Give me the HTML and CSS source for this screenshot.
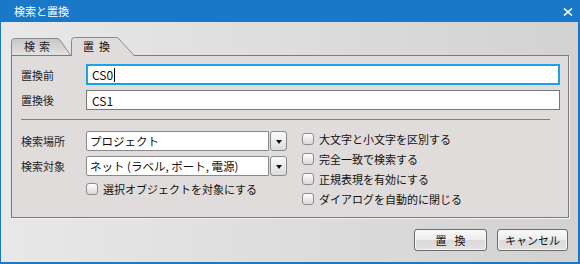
FILE: index.html
```html
<!DOCTYPE html>
<html lang="ja">
<head>
<meta charset="utf-8">
<title>検索と置換</title>
<link rel="stylesheet" href="styles.css">
</head>
<body>
<div class="window">
  <div class="titlebar">
    <span class="title">検索と置換</span>
    <svg class="close" width="10" height="8" viewBox="0 0 10 8"><path d="M1 0.5 L9 7.5 M9 0.5 L1 7.5" stroke="#fff" stroke-width="1.6" fill="none"/></svg>
  </div>
  <div class="client">
    <div class="tabs">
      <div class="tab tab-inactive">
        <svg class="tab-shape" width="60" height="17" viewBox="0 0 60 17">
          <defs><linearGradient id="g1" x1="0" y1="0" x2="0" y2="1"><stop offset="0" stop-color="#c6c6c6"/><stop offset="1" stop-color="#e2e2e2"/></linearGradient></defs>
          <path d="M0.5 17 V3.5 Q0.5 0.5 3.5 0.5 H46 Q48 0.5 49 2 L59.5 17" fill="url(#g1)" stroke="#8a8a8a"/>
        </svg>
        <span class="tab-label">検索</span>
      </div>
      <div class="tab tab-active">
        <svg class="tab-shape" width="64" height="19" viewBox="0 0 64 19">
          <path d="M0.5 19 V3.5 Q0.5 0.5 3.5 0.5 H45 Q47 0.5 48 2 L63.5 19" fill="#e0dcdb" stroke="#8a8a8a"/>
        </svg>
        <span class="tab-label">置換</span>
      </div>
    </div>
    <div class="panel">
      <div class="row">
        <span class="label">置換前</span>
        <div class="textbox focused"><span>CS0</span><span class="caret"></span></div>
      </div>
      <div class="row row2">
        <span class="label">置換後</span>
        <div class="textbox"><span>CS1</span></div>
      </div>
      <div class="separator"></div>
      <div class="lower">
        <div class="left-col">
          <div class="row sel-row">
            <span class="label">検索場所</span>
            <div class="combo"><div class="combo-field">プロジェクト</div><div class="combo-btn"><span class="arrow"></span></div></div>
          </div>
          <div class="row sel-row sel-row2">
            <span class="label">検索対象</span>
            <div class="combo"><div class="combo-field">ネット (ラベル, ポート, 電源)</div><div class="combo-btn"><span class="arrow"></span></div></div>
          </div>
          <div class="check left-check"><span class="box"></span>選択オブジェクトを対象にする</div>
        </div>
        <div class="right-col">
          <div class="check"><span class="box"></span>大文字と小文字を区別する</div>
          <div class="check"><span class="box"></span>完全一致で検索する</div>
          <div class="check"><span class="box"></span>正規表現を有効にする</div>
          <div class="check"><span class="box"></span>ダイアログを自動的に閉じる</div>
        </div>
      </div>
    </div>
    <div class="buttons">
      <button class="btn btn-replace">置換</button>
      <button class="btn btn-cancel">キャンセル</button>
    </div>
  </div>
</div>
</body>
</html>
```

FILE: styles.css
```css
html, body {
  margin: 0;
  padding: 0;
}
body {
  width: 580px;
  height: 264px;
  overflow: hidden;
  font-family: "Noto Sans CJK JP", "Noto Sans", sans-serif;
  font-size: 11px;
  color: #1a1a1a;
}
.window {
  width: 580px;
  height: 264px;
  background: #1a78c8;
  display: flex;
  flex-direction: column;
}
.titlebar {
  height: 22px;
  flex: none;
  display: flex;
  align-items: center;
  justify-content: space-between;
  padding: 0 7px 0 14px;
  color: #fff;
  font-size: 11px;
}
.title {
  line-height: 22px;
}
.close {
  display: block;
  margin-top: 1px;
}
.client {
  flex: 1;
  margin: 0 2px 2px 1px;
  background: linear-gradient(to right, #e8e8e8, #d2d2d2);
  padding: 15px 9px 0 10px;
  display: flex;
  flex-direction: column;
}
.tabs {
  height: 18px;
  display: flex;
  align-items: flex-start;
  position: relative;
  z-index: 1;
}
.tab {
  position: relative;
  display: flex;
  align-items: center;
}
.tab-shape {
  position: absolute;
  left: 0;
  top: 0;
}
.tab-label {
  position: relative;
  line-height: 1;
}
.tab-inactive {
  width: 60px;
  height: 17px;
  margin-top: 1px;
  padding-left: 13px;
  box-sizing: border-box;
  color: #222;
}
.tab-inactive .tab-label {
  letter-spacing: 4px;
}
.tab-active {
  width: 64px;
  height: 19px;
  padding-left: 12px;
  box-sizing: border-box;
  color: #111;
}
.tab-active .tab-label {
  letter-spacing: 5px;
}
.panel {
  height: 163px;
  box-sizing: border-box;
  border: 1px solid #7b7b7b;
  background: #e0dcdb;
  box-shadow: 1px 1px 0 #f2f2f2;
  padding: 8px 8px 0 9px;
}
.row {
  display: flex;
  align-items: center;
}
.row2 {
  margin-top: 5px;
}
.label {
  width: 65px;
  flex: none;
  color: #222;
}
.textbox {
  flex: 1;
  height: 21px;
  box-sizing: border-box;
  background: #fff;
  border: 1px solid #777;
  padding-left: 5px;
  display: flex;
  align-items: center;
  font-size: 12px;
  color: #111;
}
.textbox.focused {
  border: 2px solid #1ba1e6;
  padding-left: 4px;
}
.row2 .textbox {
  height: 20px;
}
.caret {
  display: inline-block;
  width: 1px;
  height: 14px;
  background: #000;
  margin-left: 1px;
}
.separator {
  margin-top: 9px;
  margin-right: 10px;
  height: 1px;
  background: #7e7e7e;
}
.lower {
  display: flex;
  margin-top: 9px;
}
.left-col {
  width: 266px;
  flex: none;
}
.sel-row {
  margin-top: 2px;
}
.sel-row2 {
  margin-top: 5px;
}
.combo {
  flex: 1;
  display: flex;
  height: 20px;
}
.combo-field {
  flex: 1;
  background: #fff;
  border: 1px solid #8a8a8a;
  border-radius: 2px 0 0 2px;
  padding-left: 3px;
  display: flex;
  align-items: center;
  font-size: 11.5px;
  color: #111;
}
.combo-btn {
  width: 17px;
  margin-left: 1px;
  box-sizing: border-box;
  border: 1px solid #8a8a8a;
  border-radius: 3px;
  background: linear-gradient(#fbfbfb, #dcdcdc);
  display: flex;
  align-items: center;
  justify-content: center;
}
.arrow {
  width: 0;
  height: 0;
  border-left: 3.5px solid transparent;
  border-right: 3.5px solid transparent;
  border-top: 4px solid #111;
  margin-top: 1px;
}
.right-col {
  margin-left: 15px;
  display: flex;
  flex-direction: column;
}
.check {
  height: 20px;
  display: flex;
  align-items: center;
  color: #111;
}
.left-check {
  margin-top: 4px;
  height: 18px;
  padding-left: 65px;
}
.box {
  width: 12px;
  height: 12px;
  box-sizing: border-box;
  border: 1px solid #8c8c8c;
  border-radius: 3px;
  background: linear-gradient(#fdfdfd, #d9d9d9);
  margin-right: 5px;
  flex: none;
}
.buttons {
  display: flex;
  justify-content: flex-end;
  gap: 10px;
  margin-top: 11px;
  padding-right: 1px;
}
.btn {
  height: 22px;
  box-sizing: border-box;
  border: 1px solid #6a6a6a;
  border-radius: 3px;
  background: linear-gradient(#fafafa, #ececec 50%, #dadada 51%, #e2e2e2);
  box-shadow: inset 0 0 0 1px #f8f8f8;
  font-family: "Noto Sans CJK JP", "Noto Sans", sans-serif;
  font-size: 11px;
  color: #111;
  padding: 0;
  display: flex;
  align-items: center;
  justify-content: center;
}
.btn-replace {
  width: 73px;
  letter-spacing: 8px;
  padding-left: 8px;
}
.btn-cancel {
  width: 71px;
}
```
